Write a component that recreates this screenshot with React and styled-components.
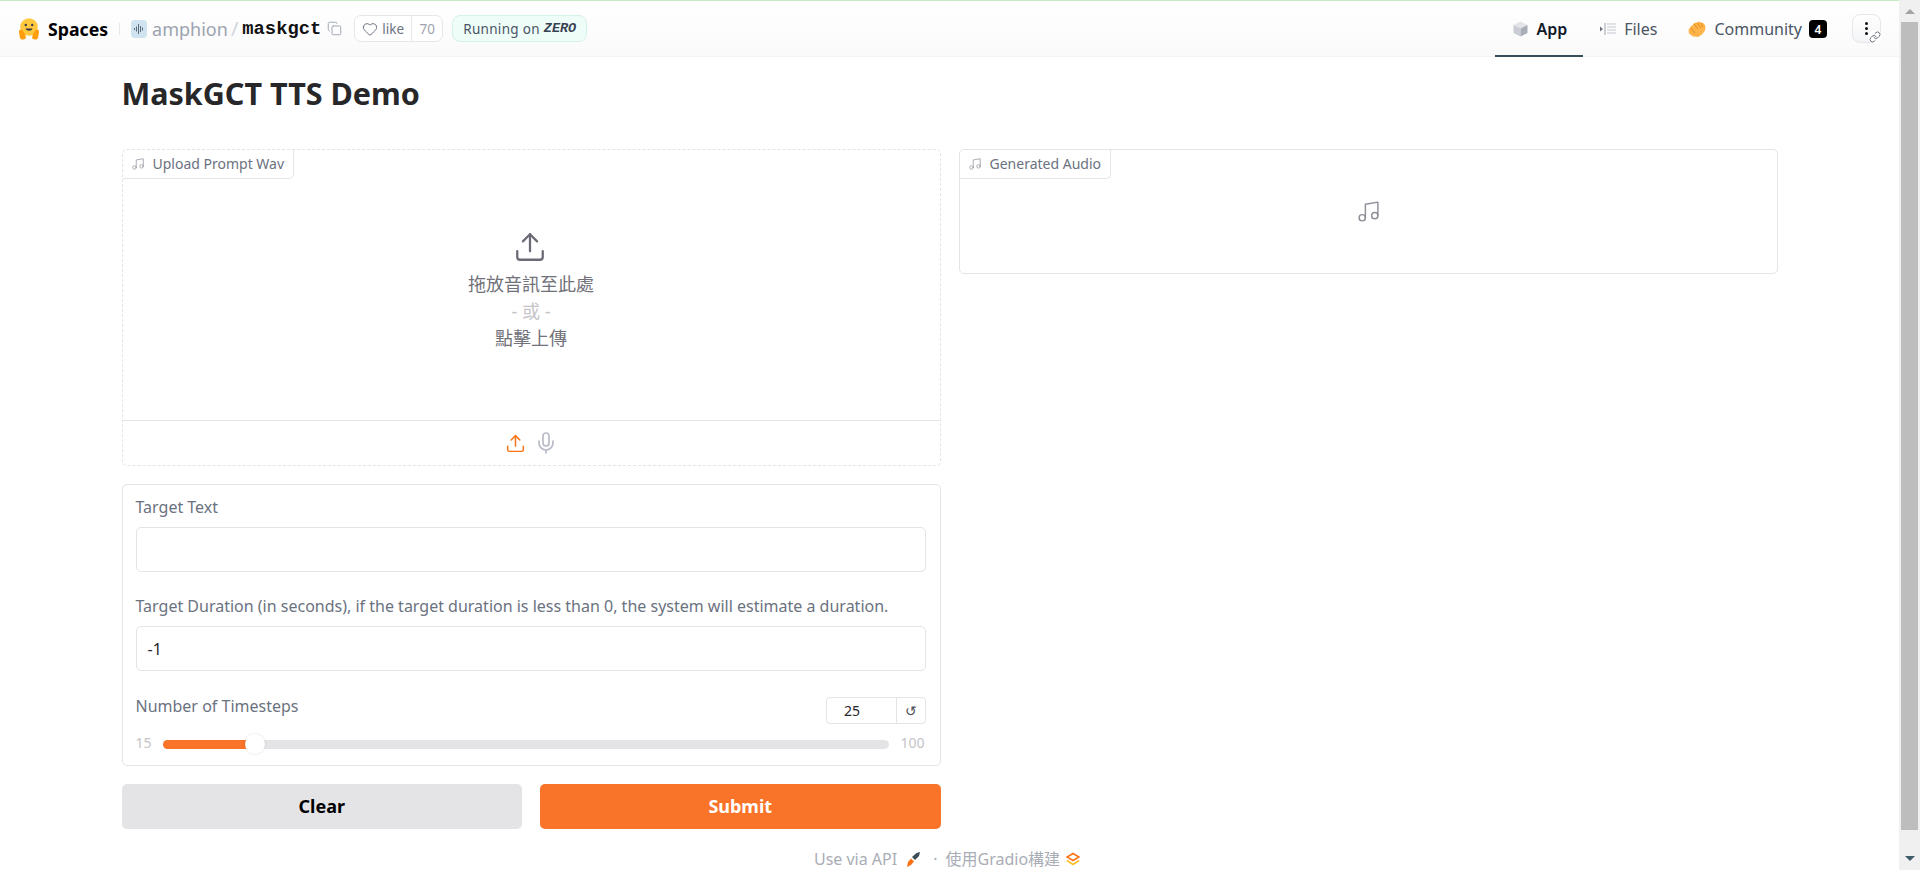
import React from 'react';
import styled, { createGlobalStyle } from 'styled-components';
import { Copy, Heart, Link, Mic, Music, Upload } from 'lucide-react';

const GlobalStyle = createGlobalStyle`
    html, body {
        margin: 0;
        height: 100%;
        overflow: hidden;
        background: white;
    }
    * {
        box-sizing: border-box;
    }
`

const Shell = styled.div`
    display: flex;
    height: 870px;
    font-family: "Noto Sans", "Noto Sans CJK TC", sans-serif;
`

const Page = styled.div`
    flex: 1;
    min-width: 0;
    display: flex;
    flex-direction: column;
`

const Scrollbar = styled.div`
    width: 21px;
    display: flex;
    flex-direction: column;
    align-items: center;
    padding-bottom: 1px;
    background: #f0f0f0;
`

const ScrollArrow = styled.div`
    height: 22px;
    width: 100%;
    margin-top: ${props => props.down ? 'auto' : '0'};
    display: flex;
    align-items: center;
    justify-content: center;
    &::before {
        content: '';
        border-left: 5px solid transparent;
        border-right: 5px solid transparent;
        ${props => props.down ? 'border-top' : 'border-bottom'}: 5px solid ${props => props.down ? '#3f5d68' : '#a3a3a3'};
    }
`

const ScrollThumb = styled.div`
    width: 17px;
    height: 808px;
    background: #bdbdbd;
`

const Header = styled.header`
    height: 57px;
    flex-shrink: 0;
    display: flex;
    align-items: center;
    justify-content: space-between;
    padding: 0 18px;
    border-top: 1px solid #c6e9c6;
    border-bottom: 1px solid #f3f4f6;
    background: linear-gradient(to bottom, #ffffff, #fafafb);
`

const HeaderLeft = styled.div`
    display: flex;
    align-items: center;
`

const Brand = styled.span`
    margin-left: 8px;
    font-size: 17.7px;
    font-weight: 700;
    color: #000;
`

const Divider = styled.span`
    width: 1px;
    height: 12px;
    margin: 0 11px;
    background: #e5e7eb;
`

const Owner = styled.span`
    margin-left: 5px;
    font-size: 18px;
    color: #9ca3af;
`

const Slash = styled.span`
    margin: 0 4px 0 3px;
    font-size: 20px;
    color: #d1d5db;
`

const RepoName = styled.span`
    font-family: "Liberation Mono", monospace;
    font-size: 18.8px;
    font-weight: 700;
    color: #111;
`

const CopyBtn = styled.span`
    display: flex;
    margin: 0 12px 0 6px;
    color: #9ca3af;
`

const LikeBox = styled.div`
    width: 89px;
    height: 27px;
    display: flex;
    align-items: center;
    font-size: 13.5px;
    color: #6b7280;
    border: 1px solid #e5e7eb;
    border-radius: 7px;
    background: white;
`

const LikeLabel = styled.span`
    flex: 1;
    display: flex;
    align-items: center;
    justify-content: center;
    gap: 4px;
    height: 100%;
    border-right: 1px solid #e5e7eb;
`

const LikeCount = styled.span`
    width: 30px;
    text-align: center;
    color: #9ca3af;
`

const RunningBadge = styled.div`
    width: 135px;
    height: 27px;
    margin-left: 9px;
    display: flex;
    align-items: center;
    justify-content: center;
    gap: 4px;
    font-size: 13.5px;
    letter-spacing: 0.3px;
    color: #4b5563;
    border: 1px solid #d5f1ec;
    border-radius: 8px;
    background: #effdf9;
`

const Zero = styled.b`
    font-family: "Liberation Mono", monospace;
    font-style: italic;
    font-size: 13.5px;
    letter-spacing: 0;
    color: #374151;
`

const Tabs = styled.nav`
    display: flex;
    align-items: stretch;
    height: 100%;
`

const Tab = styled.div`
    display: flex;
    align-items: center;
    gap: 8px;
    padding: 2px ${props => props.tight ? '14px' : '16px'} 0 ${props => props.active ? '18px' : '17px'};
    font-size: 16px;
    font-weight: ${props => props.active ? 600 : 400};
    color: ${props => props.active ? '#111827' : '#4b5563'};
    border-bottom: 2px solid ${props => props.active ? '#374f5b' : 'transparent'};
    margin-bottom: -1px;
`

const CountBadge = styled.span`
    width: 18px;
    height: 18px;
    margin-left: -1px;
    display: flex;
    align-items: center;
    justify-content: center;
    font-size: 12px;
    font-weight: 600;
    color: white;
    border-radius: 4px;
    background: black;
`

const MenuBtn = styled.div`
    position: relative;
    width: 29px;
    height: 29px;
    margin: auto 0 auto 9px;
    display: flex;
    flex-direction: column;
    align-items: center;
    justify-content: center;
    gap: 2px;
    border: 1px solid #e5e7eb;
    border-radius: 8px;
    background: linear-gradient(to bottom, #fff, #f3f4f6);
`

const Dot = styled.span`
    width: 3px;
    height: 3px;
    border-radius: 50%;
    background: #111;
`

const LinkBadge = styled.span`
    position: absolute;
    right: -2px;
    bottom: -2px;
    width: 14px;
    height: 14px;
    display: flex;
    align-items: center;
    justify-content: center;
    color: #6b7280;
    border-radius: 50%;
    background: white;
`

const Container = styled.main`
    width: 1656px;
    margin: 0 auto;
    flex: 1;
    display: flex;
    flex-direction: column;
`

const Title = styled.h1`
    margin: 15px 0 0;
    height: 77px;
    font-size: 30.5px;
    line-height: 42px;
    font-weight: 700;
    color: #27272a;
`

const Columns = styled.div`
    display: grid;
    grid-template-columns: 819px 819px;
    gap: 18px;
    align-items: start;
`

const Column = styled.div`
    display: flex;
    flex-direction: column;
`

const Panel = styled.section`
    position: relative;
    display: flex;
    flex-direction: column;
    height: ${props => props.height};
    border: 1px ${props => props.dashed ? 'dashed' : 'solid'} #e4e4e7;
    border-radius: 5px;
    background: white;
`

const PanelTag = styled.div`
    position: absolute;
    top: 0;
    left: 0;
    height: 29px;
    display: flex;
    align-items: center;
    gap: 8px;
    padding: 0 9px 1px 8px;
    font-size: 14px;
    color: #6b7280;
    border-right: 1px solid #e4e4e7;
    border-bottom: 1px solid #e4e4e7;
    border-radius: 5px 0 5px 0;
    background: white;
    svg {
        color: #a1a1aa;
    }
`

const DropZone = styled.div`
    flex: 1;
    display: flex;
    flex-direction: column;
    align-items: center;
    padding-top: 80px;
    font-size: 18px;
    line-height: 27px;
    color: #71717a;
`

const DropIcon = styled.span`
    display: flex;
    height: 41px;
    margin-left: -2px;
    color: #6b6b76;
`

const OrText = styled.span`
    color: #c4c4c8;
`

const SourceBar = styled.div`
    height: 45px;
    display: flex;
    align-items: center;
    justify-content: center;
    gap: 8px;
    border-top: 1px solid #e4e4e7;
`

const SourceIcon = styled.span`
    display: flex;
    color: ${props => props.active ? '#f97316' : '#b9bbc6'};
`

const EmptyAudio = styled.div`
    flex: 1;
    display: flex;
    align-items: center;
    justify-content: center;
    color: #8f8f99;
`

const FormCard = styled.section`
    height: 282px;
    margin-top: 18px;
    padding: 11px 14px 0 13px;
    border: 1px solid #e4e4e7;
    border-radius: 5px;
`

const FieldLabel = styled.label`
    display: block;
    font-size: 16px;
    line-height: 22px;
    color: #6b7280;
`

const TextInput = styled.div`
    height: 45px;
    margin: 9px 0 23px;
    padding: 0 11px;
    display: flex;
    align-items: center;
    font-size: 16px;
    color: #27272a;
    border: 1px solid #e4e4e7;
    border-radius: 5px;
`

const SliderHead = styled.div`
    display: flex;
    justify-content: space-between;
    align-items: flex-start;
    ${FieldLabel} {
        margin-top: 1px;
    }
`

const StepperBox = styled.div`
    width: 100px;
    height: 27px;
    margin-top: 3px;
    display: flex;
    align-items: center;
    font-size: 14px;
    color: #27272a;
    border: 1px solid #e4e4e7;
    border-radius: 4px;
`

const StepperValue = styled.span`
    width: 69px;
    padding-right: 18px;
    text-align: center;
`

const ResetBtn = styled.span`
    flex: 1;
    height: 100%;
    display: flex;
    align-items: center;
    justify-content: center;
    font-size: 14px;
    color: #52525b;
    border-left: 1px solid #e4e4e7;
`

const SliderRow = styled.div`
    display: flex;
    align-items: center;
    gap: 11px;
    margin-top: 9px;
    padding-right: 1px;
    font-size: 14px;
    line-height: 20px;
    color: #c4c4c8;
`

const Track = styled.div`
    position: relative;
    flex: 1;
    height: 9px;
    margin-top: 2px;
    border-radius: 5px;
    background: #e4e4e7;
`

const TrackFill = styled.div`
    height: 100%;
    border-radius: 5px 0 0 5px;
    background: #f97329;
`

const Thumb = styled.div`
    position: absolute;
    top: -6px;
    width: 20px;
    height: 20px;
    margin-left: -10px;
    border-radius: 50%;
    background: white;
    box-shadow: 0 0 3px rgba(0, 0, 0, 0.12);
`

const Actions = styled.div`
    display: grid;
    grid-template-columns: 1fr 1fr;
    gap: 18px;
    margin-top: 18px;
`

const ActionBtn = styled.button`
    height: 45px;
    padding: 0 0 2px;
    font-family: inherit;
    font-size: 18px;
    font-weight: 700;
    color: ${props => props.primary ? 'white' : 'black'};
    border: 0;
    border-radius: 5px;
    background: ${props => props.primary ? '#f97329' : '#e4e4e7'};
`

const Footer = styled.footer`
    display: flex;
    align-items: center;
    justify-content: center;
    margin-top: 19px;
    padding-right: 5px;
    font-size: 16px;
    line-height: 22px;
    color: #a9adb5;
`

const FooterDot = styled.span`
    margin: 0 8px 0 13px;
`

const FooterIcon = styled.span`
    display: flex;
    margin-left: ${props => props.gap};
`

function HuggingFace() {
    return (
        <svg width="22" height="23" viewBox="0 0 22 23">
            <circle cx="11" cy="10" r="8.8" fill="#ffc83d" />
            <path d="M1 15c0-3 3-3 4-1l2 3 1 4c-2 2-5 2-6 0z" fill="#ff9d0b" />
            <path d="M21 15c0-3-3-3-4-1l-2 3-1 4c2 2 5 2 6 0z" fill="#ff9d0b" />
            <circle cx="7.8" cy="8" r="1.2" fill="#3a3b45" />
            <circle cx="14.2" cy="8" r="1.2" fill="#3a3b45" />
            <path d="M7.5 11.5c1 3 6 3 7 0z" fill="#3a3b45" />
        </svg>
    )
}

function Avatar() {
    return (
        <svg width="16" height="18" viewBox="0 0 16 18">
            <rect width="16" height="18" rx="4" fill="#cfe4f0" />
            <path d="M3.5 8v2M5.5 6.5v5M7.5 4v10M9.5 6v6M11.5 7.5v3" stroke="#5d6b7a" strokeWidth="1" />
        </svg>
    )
}

function Cube() {
    return (
        <svg width="15" height="16" viewBox="0 0 15 16">
            <path d="M7.5 0.5 14.5 4 7.5 7.5 0.5 4z" fill="#e2e4e9" />
            <path d="M0.5 4 7.5 7.5V15.5L0.5 12z" fill="#c9ccd4" />
            <path d="M14.5 4 7.5 7.5V15.5L14.5 12z" fill="#a9adb8" />
        </svg>
    )
}

function FilesIcon() {
    return (
        <svg width="16" height="12" viewBox="0 0 16 12">
            <path d="M0 3.5 3 6 0 8.5z" fill="#6b7280" />
            <path d="M5 0v12" stroke="#9ca3af" />
            <path d="M7 1h9M7 4h9M7 7h9M7 10h9" stroke="#c4c8cf" strokeWidth="1.2" />
        </svg>
    )
}

function Clap() {
    return (
        <svg width="18" height="16" viewBox="0 0 18 16">
            <path d="M0.5 9 3 5l2-1 1-2 3-.5 2-1 2 1 3 1 1.5 3-.5 4-3 4-4 2.500-5-.5-4-3z" fill="#fdb44b" />
            <path d="M6 3l4 5M9 2l4 5M13 2l2 4M3 7l4 5" stroke="#ea8a1c" strokeWidth="1" />
        </svg>
    )
}

function Rocket() {
    return (
        <svg width="13" height="15" viewBox="0 0 13 15">
            <path d="M5 5 9.500 1 13 0l-1 4-4 4z" fill="#3c4d57" />
            <path d="M4 6.500 7 9.500 4 13 0 15l1-5z" fill="#f97316" />
        </svg>
    )
}

function GradioLogo() {
    return (
        <svg width="14" height="14" viewBox="0 0 14 14" fill="none">
            <path d="M7 1.500 13 5 7 8.500 1 5z" stroke="#f97316" strokeWidth="1.600" />
            <path d="M1 8.500 7 12.500 13 8.500" stroke="#fbbf24" strokeWidth="1.600" />
        </svg>
    )
}

const sliderPercent = 12.7;

export default function App() {
    return (
        <Shell>
            <GlobalStyle />
            <Page>
                <Header>
                    <HeaderLeft>
                        <HuggingFace />
                        <Brand>Spaces</Brand>
                        <Divider />
                        <Avatar />
                        <Owner>amphion</Owner>
                        <Slash>/</Slash>
                        <RepoName>maskgct</RepoName>
                        <CopyBtn><Copy size={15} strokeWidth={1.5} /></CopyBtn>
                        <LikeBox>
                            <LikeLabel><Heart size={16} strokeWidth={1.5} />like</LikeLabel>
                            <LikeCount>70</LikeCount>
                        </LikeBox>
                        <RunningBadge>Running on <Zero>ZERO</Zero></RunningBadge>
                    </HeaderLeft>
                    <Tabs>
                        <Tab active><Cube />App</Tab>
                        <Tab tight><FilesIcon />Files</Tab>
                        <Tab><Clap />Community<CountBadge>4</CountBadge></Tab>
                        <MenuBtn>
                            <Dot /><Dot /><Dot />
                            <LinkBadge><Link size={12} /></LinkBadge>
                        </MenuBtn>
                    </Tabs>
                </Header>
                <Container>
                    <Title>MaskGCT TTS Demo</Title>
                    <Columns>
                        <Column>
                            <Panel dashed height="317px">
                                <PanelTag><Music size={14} strokeWidth={1.5} />Upload Prompt Wav</PanelTag>
                                <DropZone>
                                    <DropIcon><Upload size={34} strokeWidth={1.6} /></DropIcon>
                                    <span>拖放音訊至此處</span>
                                    <OrText>- 或 -</OrText>
                                    <span>點擊上傳</span>
                                </DropZone>
                                <SourceBar>
                                    <SourceIcon active><Upload size={21} strokeWidth={1.7} /></SourceIcon>
                                    <SourceIcon><Mic size={24} strokeWidth={1.7} /></SourceIcon>
                                </SourceBar>
                            </Panel>
                            <FormCard>
                                <FieldLabel>Target Text</FieldLabel>
                                <TextInput />
                                <FieldLabel>Target Duration (in seconds), if the target duration is less than 0, the system will estimate a duration.</FieldLabel>
                                <TextInput>-1</TextInput>
                                <SliderHead>
                                    <FieldLabel>Number of Timesteps</FieldLabel>
                                    <StepperBox>
                                        <StepperValue>25</StepperValue>
                                        <ResetBtn>↺</ResetBtn>
                                    </StepperBox>
                                </SliderHead>
                                <SliderRow>
                                    <span>15</span>
                                    <Track>
                                        <TrackFill style={{ width: `${sliderPercent}%` }} />
                                        <Thumb style={{ left: `${sliderPercent}%` }} />
                                    </Track>
                                    <span>100</span>
                                </SliderRow>
                            </FormCard>
                            <Actions>
                                <ActionBtn>Clear</ActionBtn>
                                <ActionBtn primary>Submit</ActionBtn>
                            </Actions>
                        </Column>
                        <Column>
                            <Panel height="125px">
                                <PanelTag><Music size={14} strokeWidth={1.5} />Generated Audio</PanelTag>
                                <EmptyAudio><Music size={25} strokeWidth={1.4} /></EmptyAudio>
                            </Panel>
                        </Column>
                    </Columns>
                    <Footer>
                        Use via API
                        <FooterIcon gap="10px"><Rocket /></FooterIcon>
                        <FooterDot>·</FooterDot>
                        使用Gradio構建
                        <FooterIcon gap="6px"><GradioLogo /></FooterIcon>
                    </Footer>
                </Container>
            </Page>
            <Scrollbar>
                <ScrollArrow />
                <ScrollThumb />
                <ScrollArrow down />
            </Scrollbar>
        </Shell>
    )
}
